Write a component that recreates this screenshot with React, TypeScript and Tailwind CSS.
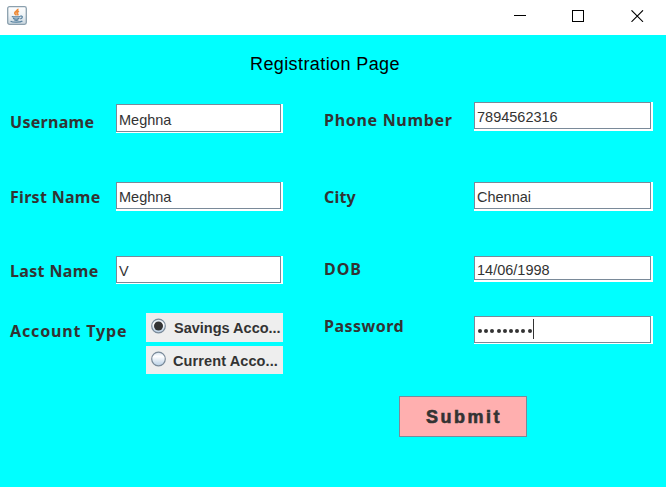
import type { ReactNode } from "react";

function Label({ text, className }: { text: string; className: string }) {
  return (
    <label
      className={`block shrink-0 whitespace-nowrap text-base leading-5 font-bold text-[#333] font-['Noto_Sans','Open_Sans',sans-serif] ${className}`}
    >
      {text}
    </label>
  );
}

function Field({ className, children }: { className: string; children: ReactNode }) {
  return (
    <div className={`shrink-0 bg-white pr-0.5 ${className}`}>
      <div className="flex h-full items-center border border-[#7a8a99] pl-0.5 text-[14.5px] whitespace-nowrap text-[#333] font-['Liberation_Sans',Arial,sans-serif]">
        {children}
      </div>
    </div>
  );
}

function Value({ text }: { text: string }) {
  return <span className="pt-[3px] leading-5">{text}</span>;
}

function Radio({ text, checked, className }: { text: string; checked?: boolean; className: string }) {
  return (
    <div className={`flex w-[137px] bg-[#eee] pl-[5px] ${className}`}>
      <svg width="16" height="16" viewBox="0 0 16 16" className="mt-[5px] shrink-0">
        <defs>
          <linearGradient id="shade" x1="0" y1="0" x2="0" y2="1">
            <stop offset="0" stopColor="#d3e2ef" />
            <stop offset="0.3" stopColor="#fff" />
            <stop offset="1" stopColor="#b8cfe5" />
          </linearGradient>
        </defs>
        <circle cx="7.5" cy="8" r="6.8" fill="url(#shade)" stroke="#7a8a99" strokeWidth="1.2" />
        {checked && <circle cx="7.5" cy="8" r="4.5" fill="#333" />}
      </svg>
      <span className="mt-[5px] text-[14.5px] leading-5 font-bold whitespace-nowrap text-[#333] font-['Liberation_Sans',Arial,sans-serif]">
        {text}
      </span>
    </div>
  );
}

function JavaIcon() {
  return (
    <svg width="20" height="19" viewBox="0 0 20 19" fill="none">
      <defs>
        <linearGradient id="tile" x1="0" y1="0" x2="0" y2="1">
          <stop offset="0" stopColor="#fff" />
          <stop offset="0.5" stopColor="#eef3f6" />
          <stop offset="1" stopColor="#c8d6df" />
        </linearGradient>
      </defs>
      <rect x="0.7" y="0.7" width="18.6" height="17.6" rx="1.8" fill="url(#tile)" stroke="#8ba0ae" strokeWidth="1.3" />
      <path d="M10.8 2.8c.7 2.1-3.6 2.7-3 4.6.2.8 1.3 1.2 1.5 2M12 5.3c-2.2.9-2.6 1.8-1.2 2.8.3.4 0 .9-.4 1.2" stroke="#ee8b38" strokeWidth="1.7" />
      <path d="M4.8 10.5c1 .6 7.4.6 8.6 0M6 12.4c1.3.5 5 .5 6.4 0M7.3 14c1 .4 3 .4 4 0M13.4 10c2.6-.4 2.6 2-.1 2.8" stroke="#55809f" strokeWidth="1.2" />
      <path d="M3.6 15.2c2 1.4 9.8 1.3 11.8-.2" stroke="#55809f" strokeWidth="1.3" />
    </svg>
  );
}

export default function App() {
  return (
    <div className="flex h-[487px] w-[667px] flex-col overflow-hidden bg-white">
      <header className="flex h-[35px] shrink-0 items-start pt-1.5 pl-[7px]">
        <JavaIcon />
        <div className="mt-1 ml-[487px] flex gap-[46px]">
          <svg width="12" height="12" shapeRendering="crispEdges">
            <rect y="5" width="12" height="1" />
          </svg>
          <svg width="12" height="12" shapeRendering="crispEdges">
            <rect x="0.5" y="0.5" width="11" height="11" fill="none" stroke="#000" />
          </svg>
          <svg width="13" height="12" className="ml-px">
            <path d="M0.5 0.3L12 11.8M12 0.3L0.5 11.8" stroke="#000" strokeWidth="1.1" />
          </svg>
        </div>
      </header>
      <main className="h-[452px] w-[666px] bg-[#00ffff] pt-[18px]">
        <h1 className="h-[22px] pl-[250px] text-lg leading-[22px] tracking-[0.4px] text-black font-['Liberation_Sans',Arial,sans-serif]">
          Registration Page
        </h1>
        <div className="flex h-[321px] pl-2.5">
          <section className="w-[273px]">
            <div className="flex h-[78px] justify-between pt-[29px]">
              <Label text="Username" className="mt-2 tracking-[0.3px]" />
              <Field className="h-[29px] w-[167px] pb-px">
                <Value text="Meghna" />
              </Field>
            </div>
            <div className="flex h-[74px] justify-between pt-[29px]">
              <Label text="First Name" className="mt-[5px] tracking-[0.3px]" />
              <Field className="h-[29px] w-[167px] pb-0.5">
                <Value text="Meghna" />
              </Field>
            </div>
            <div className="flex h-[57px] justify-between pt-[29px]">
              <Label text="Last Name" className="mt-[5px] tracking-[0.35px]" />
              <Field className="h-7 w-[167px] pb-px">
                <Value text="V" />
              </Field>
            </div>
            <div className="flex justify-between pt-[29px]">
              <Label text="Account Type" className="mt-2 tracking-[0.85px]" />
              <div className="flex flex-col gap-1">
                <Radio text="Savings Acco..." checked className="h-[29px] gap-[7px]" />
                <Radio text="Current Acco..." className="h-7 gap-1.5 tracking-[0.1px]" />
              </div>
            </div>
          </section>
          <section className="ml-[41px] w-[329px]">
            <div className="flex h-[78px] justify-between pt-[27px]">
              <Label text="Phone Number" className="mt-2 tracking-[0.7px]" />
              <Field className="h-[29px] w-[179px] pb-0.5">
                <Value text="7894562316" />
              </Field>
            </div>
            <div className="flex h-[74px] justify-between pt-[29px]">
              <Label text="City" className="mt-[5px] tracking-[0.2px]" />
              <Field className="h-[29px] w-[179px] pb-0.5">
                <Value text="Chennai" />
              </Field>
            </div>
            <div className="flex h-[57px] justify-between pt-[29px]">
              <Label text="DOB" className="mt-[3px] tracking-[1px]" />
              <Field className="h-[26px] w-[179px] pb-0.5">
                <Value text="14/06/1998" />
              </Field>
            </div>
            <div className="flex justify-between pt-8">
              <Label text="Password" className="tracking-[0.5px]" />
              <Field className="h-7 w-[179px] pb-px">
                <span className="flex gap-[2.2px] pt-0.5 pl-px">
                  {Array.from({ length: 9 }, (_, i) => (
                    <i key={i} className="size-1 rounded-full bg-[#333]" />
                  ))}
                </span>
                <i className="mb-px ml-px h-5 w-px bg-[#333]" />
              </Field>
            </div>
          </section>
        </div>
        <button className="ml-[399px] block h-[41px] w-32 border border-[#7a8a99] bg-[#ffafaf] pl-0.5 text-lg font-bold tracking-[2.5px] text-[#333] [-webkit-text-stroke:0.6px_#333] font-['Liberation_Sans',Arial,sans-serif]">
          Submit
        </button>
      </main>
    </div>
  );
}
